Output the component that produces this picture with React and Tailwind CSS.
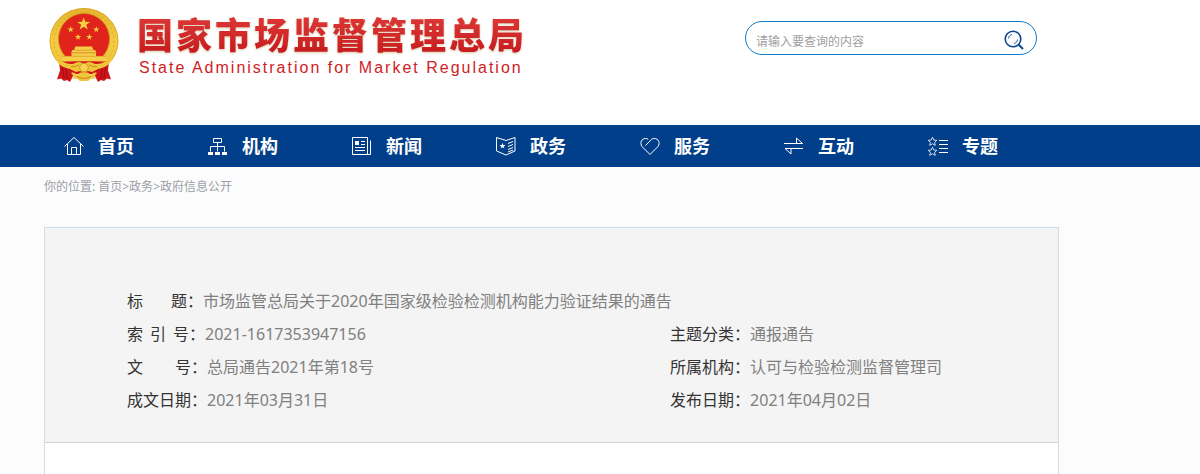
import React, { useState } from 'react';

const starPoints = (cx, cy, r) => {
  const points = [];
  for (let i = 0; i < 10; i++) {
    const radius = i % 2 === 0 ? r : r * 0.4;
    const angle = (Math.PI / 5) * i - Math.PI / 2;
    points.push(`${(cx + radius * Math.cos(angle)).toFixed(2)},${(cy + radius * Math.sin(angle)).toFixed(2)}`);
  }
  return points.join(' ');
};

const Emblem = () => (
  <svg viewBox="0 0 70 75" className="h-[75px] w-[70px] shrink-0" aria-hidden="true">
    <defs>
      <linearGradient id="gold" x1="0" y1="0" x2="0" y2="1">
        <stop offset="0" stopColor="#e6b42f" />
        <stop offset="0.5" stopColor="#f3cb43" />
        <stop offset="1" stopColor="#f0c238" />
      </linearGradient>
    </defs>
    <ellipse cx="35" cy="33" rx="34.5" ry="33" fill="url(#gold)" />
    <ellipse cx="35" cy="33" rx="30" ry="29" fill="none" stroke="#cf951c" strokeWidth="1.5" strokeDasharray="1.5 3" opacity="0.4" />
    <ellipse cx="35" cy="33" rx="34" ry="32.5" fill="none" stroke="#cf9a1d" strokeWidth="0.8" opacity="0.7" />
    <circle cx="35" cy="31" r="25.5" fill="#e0241c" stroke="#c88a18" strokeWidth="0.8" />
    <g fill="#f3cf3f">
      <polygon points={starPoints(34.7, 16, 6.8)} />
      <polygon points={starPoints(21.7, 21.5, 3.3)} />
      <polygon points={starPoints(47.3, 21.5, 3.3)} />
      <polygon points={starPoints(29, 29, 3.3)} />
      <polygon points={starPoints(40.3, 29, 3.3)} />
    </g>
    {/* gate */}
    <g fill="#f5cf48">
      <path d="M26.5 38.5h16.500l1.500 3.500h-19.500z" />
      <path d="M23.500 42h22.500l1.500 2.500h-25.500z" />
      <path d="M22.500 44.500h24.500v3.500h-24.500zM13 48h44v5.500h-44z" />
    </g>
    <path d="M25 42.200h20M23 45h23.500M13 48.300h44" stroke="#d08a20" strokeWidth="0.600" />
    {/* drapes */}
    <path d="M10 53.500h50l-1 9 3 9-4-1-3 2.500-3-1-3 2-4-8h-20l-4 8-3-2-3 1-3-2.500-4 1 3-9z" fill="#d0151a" />
    <path d="M13 56l2 14M16.500 58l2 13M57 56l-2 14M53.500 58l-2 13" stroke="#9a0d12" strokeWidth="1" />
    {/* ribbon, gear and wheat stems */}
    <path d="M7 51c7 2 10 5 15 5 4 0 5-2 8-2 2 0 3 1.500 5 1.500s3-1.500 5-1.500c3 0 4 2 8 2 5 0 8-3 15-5-2 6-8 9-14 10l-6 3-4-1-4 2-4-2-4 1-6-3C15 60 9 57 7 51z" fill="#f1c53a" />
    <path d="M22 58.500c4 1 6-1.500 8-1.500M48 58.500c-4 1-6-1.500-8-1.500" fill="none" stroke="#c5821a" strokeWidth="0.900" />
    <circle cx="35" cy="59.500" r="4.300" fill="#f6d352" stroke="#c5821a" strokeWidth="0.800" />
    <path d="M22 65c2.500-1 4.500 0 6 2l3-2.500h8l3 2.500c1.500-2 3.500-3 6-2l-2.500 3 0.500 3-4-0.500-3 2.500h-8l-3-2.500-4 0.500 0.500-3z" fill="#f1c53a" />
    <path d="M28 68.500c4 2.500 10 2.500 14 0" fill="none" stroke="#c5821a" strokeWidth="1" />
  </svg>
);

const NavIcon = ({ children }) => (
  <svg viewBox="0 0 20 20" className="size-5 shrink-0" fill="none" stroke="#fff" strokeWidth="1" aria-hidden="true">
    {children}
  </svg>
);

const navItems = [
  {
    label: '首页',
    icon: (
      <NavIcon>
        <path d="M0.5 10.5L10 1.5l9.5 9M3.5 8v10.5h13V8M7.5 18.5v-7h5v7" />
      </NavIcon>
    ),
  },
  {
    label: '机构',
    icon: (
      <NavIcon>
        <path d="M5.5 2.5h8v4h-8zM9.5 6.5v9M2.5 15.5v-5h14v5" />
        <path d="M0 16h5v3H0zM7 16h5v3H7zM14 16h5v3h-5z" fill="#fff" stroke="none" />
      </NavIcon>
    ),
  },
  {
    label: '新闻',
    icon: (
      <NavIcon>
        <path d="M0.5 1.5h15v17h-15zM15.5 18.5h3v-14M9 5.5h4M9 8.5h4M3 11.5h10M3 14.5h10" />
        <path d="M3 5h4v4H3z" fill="#fff" stroke="none" />
      </NavIcon>
    ),
  },
  {
    label: '政务',
    icon: (
      <NavIcon>
        <path d="M0.5 1.5l9.5 3 9-3v13.5l-9 4-9.5-4zM12 7.5l5-2M12 10.5l5-2M12 13.5l5-2M12 16l5-2" />
        <polygon points={starPoints(6.5, 10, 3.2)} fill="#fff" stroke="none" />
      </NavIcon>
    ),
  },
  {
    label: '服务',
    icon: (
      <NavIcon>
        <path d="M10 18.5L2 10.5C-0.5 7 1.5 2.5 5.500 2.500c1 0 2 0.300 2.700 0.800M10 18.500l8-8c2.500-3.500 0.500-8-3.500-8-2.500 0-3.500 1-4.500 2.500L5.500 9.500" />
      </NavIcon>
    ),
  },
  {
    label: '互动',
    icon: (
      <NavIcon>
        <path d="M0 7.500h18.500L12.500 2v5.500M19 12.500H1L7 18v-5.500" />
      </NavIcon>
    ),
  },
  {
    label: '专题',
    icon: (
      <NavIcon>
        <polygon points="4.5,1.2 5.8,4 8.8,4.3 6.6,6.3 7.3,9.3 4.5,7.8 1.7,9.3 2.4,6.3 0.2,4.3 3.2,4" strokeWidth="0.8" />
        <polygon points="4.5,11.2 5.8,14 8.8,14.3 6.6,16.3 7.3,19.3 4.5,17.8 1.7,19.3 2.4,16.3 0.2,14.3 3.2,14" strokeWidth="0.8" />
        <path d="M11 4.500h9M11 8.500h9M11 12.500h9M11 16.500h9" />
      </NavIcon>
    ),
  },
];

const crumbs = ['首页', '政务', '政府信息公开'];

const Field = ({ label, value, gap, className }) => (
  <div className={`flex leading-[33px] ${className || ''}`}>
    <dt className="flex shrink-0 text-[#333]">
      <span className={`flex ${gap || ''}`}>
        {label.map((part) => (
          <span key={part}>{part}</span>
        ))}
      </span>
      ：
    </dt>
    <dd className="text-[#808080]">{value}</dd>
  </div>
);

const SearchBox = () => {
  const [keyword, setKeyword] = useState('');

  return (
    <form
      onSubmit={(e) => e.preventDefault()}
      className="mt-[21px] ml-auto flex h-[34px] w-[292px] items-center rounded-full border border-[#0f7ac8] pt-1 pr-3 pl-[10px]"
    >
      <input
        type="text"
        aria-label="搜索"
        placeholder="请输入要查询的内容"
        value={keyword}
        onChange={(e) => setKeyword(e.target.value)}
        className="min-w-0 flex-1 pt-1 text-xs text-[#333] outline-none placeholder:text-[#a0a0a0]"
      />
      <button type="submit" aria-label="查询">
        <svg viewBox="0 0 20 20" className="size-5" fill="none" stroke="#0b4594" aria-hidden="true">
          <circle cx="9" cy="9" r="7.8" strokeWidth="1.6" />
          <path d="M14.5 14.5L19 19" strokeWidth="2" />
          <path d="M4.5 8.5c0-2 1.5-3.5 3.5-4M13.5 9.5c0 2-1.5 3.5-3.5 4" strokeWidth="0.9" />
        </svg>
      </button>
    </form>
  );
};

function App() {
  return (
    <div className="flex min-h-screen flex-col bg-[#fcfcfc] font-['Noto_Sans','Noto_Sans_CJK_SC',sans-serif]">
      <header className="bg-white">
        <div className="flex min-h-[125px] w-full max-w-[1037px] items-start pl-[49px]">
          <a href="#" className="mt-2 flex items-start">
            <Emblem />
            <div className="ml-[18px] text-[#d0211f]">
              <h1 className="bg-linear-to-b from-[#e23c3b] to-[#c4161a] bg-clip-text font-['Noto_Sans_CJK_SC',sans-serif] text-4xl leading-[50px] font-black tracking-[3px] text-transparent drop-shadow-[0_1px_1px_#d8c8a8]">
                国家市场监督管理总局
              </h1>
              <p className="pl-0.5 font-['Liberation_Sans',sans-serif] text-base leading-5 tracking-[2px]">
                State Administration for Market Regulation
              </p>
            </div>
          </a>
          <SearchBox />
        </div>
      </header>

      <nav className="bg-[#023f8a]">
        <ul className="flex flex-wrap pl-11">
          {navItems.map((item) => (
            <li key={item.label} className="w-36">
              <a href="#" className="flex h-[42px] items-center gap-[14px] pl-5 text-lg font-bold text-white">
                {item.icon}
                <span className="pb-0.5 font-['Noto_Sans_CJK_SC',sans-serif]">{item.label}</span>
              </a>
            </li>
          ))}
        </ul>
      </nav>

      <main className="flex w-full max-w-[1059px] flex-1 flex-col pl-11">
        <div className="flex h-10 items-center text-xs text-[#9b9fa8]">
          <span className="mr-[3px]">你的位置:</span>
          {crumbs.map((crumb, i) => (
            <React.Fragment key={crumb}>
              {i > 0 && <span>&gt;</span>}
              <a href="#">{crumb}</a>
            </React.Fragment>
          ))}
        </div>

        <article className="mt-5 flex-1 border border-b-0 border-[#d0dcea] bg-white">
          <dl className="grid grid-cols-[7fr_5fr] border-b border-[#d0d3d6] bg-[#f4f4f4] pt-[57px] pb-[25px] pl-[82px] text-base">
            <Field
              label={['标', '题']}
              gap="gap-7"
              value="市场监管总局关于2020年国家级检验检测机构能力验证结果的通告"
              className="col-span-2"
            />
            <Field label={['索', '引', '号']} gap="gap-[7px]" value="2021-1617353947156" />
            <Field label={['主题分类']} value="通报通告" />
            <Field label={['文', '号']} gap="gap-8" value="总局通告2021年第18号" />
            <Field label={['所属机构']} value="认可与检验检测监督管理司" />
            <Field label={['成文日期']} value="2021年03月31日" />
            <Field label={['发布日期']} value="2021年04月02日" />
          </dl>
        </article>
      </main>
    </div>
  );
}

export default App;
